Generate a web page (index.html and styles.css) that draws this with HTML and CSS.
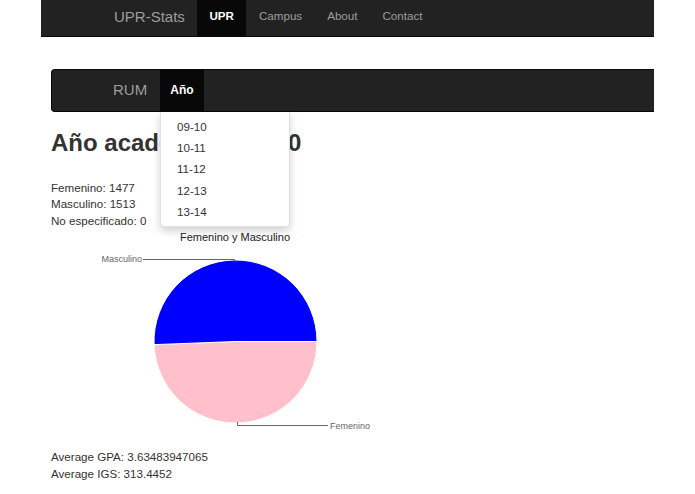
FILE: index.html
```html
<!DOCTYPE html>
<html lang="es">
<head>
<meta charset="utf-8">
<title>UPR-Stats</title>
<link rel="stylesheet" href="styles.css">
</head>
<body>
<header class="topbar">
  <a class="brand" href="#">UPR-Stats</a>
  <nav class="links">
    <a class="link active" href="#">UPR</a>
    <a class="link" href="#">Campus</a>
    <a class="link" href="#">About</a>
    <a class="link" href="#">Contact</a>
  </nav>
</header>

<div class="subbar">
  <a class="sub-brand" href="#">RUM</a>
  <a class="sub-link active" href="#">Año</a>
  <ul class="dropdown">
    <li>09-10</li>
    <li>10-11</li>
    <li>11-12</li>
    <li>12-13</li>
    <li>13-14</li>
  </ul>
</div>

<main class="content">
  <h2 class="title">Año académico <span class="year">09-10</span></h2>
  <div class="stats">
    <div>Femenino: 1477</div>
    <div>Masculino: 1513</div>
    <div>No especificado: 0</div>
  </div>
  <svg class="chart" width="340" height="212" viewBox="0 0 340 212">
    <text class="chart-title" x="184" y="13" text-anchor="middle">Femenino y Masculino</text>
    <path d="M184.5 113.5 L266 113.5 A81.5 81.5 0 0 1 103.06 116.63 Z" fill="#ffc0cb" stroke="#fff" stroke-width="1"/>
    <path d="M184.5 113.5 L103.06 116.63 A81.5 81.5 0 1 1 266 113.5 Z" fill="#0000ff" stroke="#fff" stroke-width="1"/>
    <path d="M92 31.5 H183.5 V33.5" fill="none" stroke="#666" stroke-width="1"/>
    <text class="chart-label" x="91" y="34" text-anchor="end">Masculino</text>
    <path d="M186.5 194 V197.5 H277" fill="none" stroke="#666" stroke-width="1"/>
    <text class="chart-label" x="279" y="201">Femenino</text>
  </svg>
  <div class="averages">
    <div>Average GPA: 3.63483947065</div>
    <div>Average IGS: 313.4452</div>
  </div>
</main>
</body>
</html>
```

FILE: styles.css
```css
* { box-sizing: border-box; }

body {
  margin: 0;
  background: #fff;
  font-family: "Liberation Sans", Arial, Helvetica, sans-serif;
  color: #333;
  font-size: 11.6px;
  line-height: 16.6px;
}

a { text-decoration: none; }

.topbar {
  margin-left: 41px;
  width: 613px;
  height: 37px;
  background: #222;
  border-bottom: 1px solid #080808;
  display: flex;
  align-items: stretch;
}

.brand {
  color: #9d9d9d;
  font-size: 15px;
  margin-left: 73px;
  padding-bottom: 2px;
  display: flex;
  align-items: center;
  width: 83px;
}

.links { display: flex; }

.link {
  color: #9d9d9d;
  font-size: 11.6px;
  padding: 0 12.5px 3px;
  display: flex;
  align-items: center;
}

.link.active {
  background: #080808;
  color: #fff;
  font-weight: bold;
}

.subbar {
  position: relative;
  margin: 32px 0 0 51px;
  width: 603px;
  height: 43px;
  background: #222;
  border: 1px solid #080808;
  border-right: 0;
  border-radius: 4px 0 0 4px;
  display: flex;
  align-items: stretch;
}

.sub-brand {
  color: #9d9d9d;
  font-size: 15px;
  margin-left: 61px;
  width: 47px;
  display: flex;
  align-items: center;
}

.sub-link {
  color: #fff;
  font-weight: bold;
  font-size: 12px;
  background: #080808;
  width: 44px;
  display: flex;
  align-items: center;
  justify-content: center;
}

.dropdown {
  position: absolute;
  top: 42px;
  left: 108px;
  width: 130px;
  margin: 0;
  padding: 4px 0;
  list-style: none;
  background: #fff;
  border: 1px solid rgba(0, 0, 0, 0.12);
  border-top: 0;
  border-radius: 0 0 4px 4px;
  box-shadow: 0 4px 9px rgba(0, 0, 0, 0.18);
  z-index: 10;
}

.dropdown li {
  padding: 0 16px;
  height: 21.2px;
  line-height: 21.2px;
  font-size: 11.6px;
  color: #333;
}

.content { padding-left: 51px; }

.title {
  margin: 16.5px 0 23.5px;
  font-size: 24px;
  font-weight: bold;
  line-height: 27.5px;
  color: #333;
}

.year { margin-left: 5px; }

.stats { line-height: 16.5px; }

.chart { display: block; margin-top: -1px; }

.chart-title {
  font-family: "Liberation Sans", Arial, sans-serif;
  font-size: 11px;
  fill: #222;
}

.chart-label {
  font-family: "Liberation Sans", Arial, sans-serif;
  font-size: 9px;
  fill: #666;
}

.averages { margin-top: 8px; line-height: 17px; }
```
